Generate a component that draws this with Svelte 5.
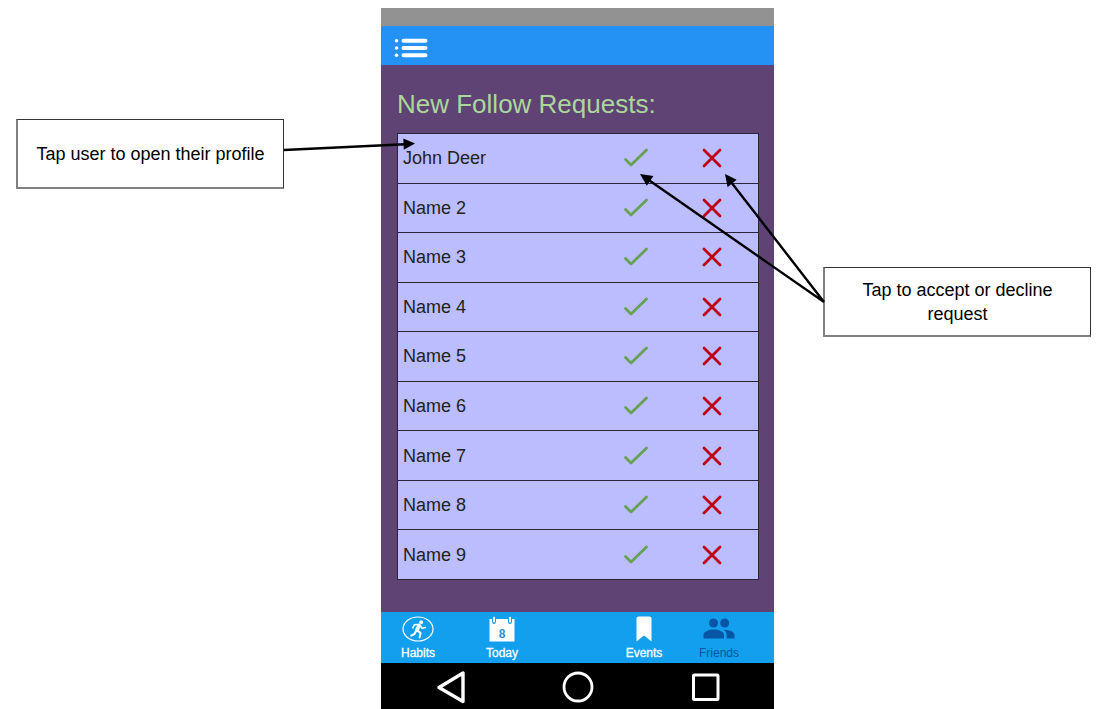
<script>
  let requests = $state([
    'John Deer', 'Name 2', 'Name 3', 'Name 4', 'Name 5', 'Name 6', 'Name 7', 'Name 8', 'Name 9'
  ]);
</script>

<main class="board">
  <p class="note note-left">Tap user to open their profile</p>

  <section class="phone">
    <div class="status"></div>
    <header class="appbar">
      <button class="icon-button" aria-label="Menu">
        <svg width="34" height="20" viewBox="0 0 34 20" fill="#fff">
          <circle cx="2.5" cy="2.8" r="1.8" /><circle cx="2.5" cy="10" r="1.8" /><circle cx="2.5" cy="17.2" r="1.8" />
          <path d="M9.5 2.8H31.5M9.5 10H31.5M9.5 17.2H31.5" stroke="#fff" stroke-width="4" stroke-linecap="round" />
        </svg>
      </button>
    </header>

    <div class="content">
      <h1>New Follow Requests:</h1>
      <table>
        <tbody>
          {#each requests as name}
            <tr>
              <td><button class="user">{name}</button></td>
              <td class="accept">
                <button class="icon-button" aria-label="Accept {name}">
                  <svg width="26" height="20" viewBox="0 0 26 20" fill="none" stroke="#66a154" stroke-width="2.8" stroke-linecap="round" stroke-linejoin="round">
                    <path d="M2.5 11.5L8 17L23.5 2" />
                  </svg>
                </button>
              </td>
              <td class="decline">
                <button class="icon-button" aria-label="Decline {name}">
                  <svg width="20" height="20" viewBox="0 0 20 20" fill="none" stroke="#bd0016" stroke-width="2.8" stroke-linecap="round">
                    <path d="M2 2L18 18M18 2L2 18" />
                  </svg>
                </button>
              </td>
            </tr>
          {/each}
        </tbody>
      </table>
    </div>

    <nav class="tabs">
      <div class="group group-start">
        <a href="#habits">
          <svg width="32" height="26" viewBox="0 0 32 26" fill="none" stroke="#fff" stroke-linecap="round" stroke-linejoin="round">
            <ellipse cx="16" cy="13" rx="15" ry="12" stroke-width="1.2" />
            <circle cx="19.2" cy="6.2" r="1.9" fill="#fff" stroke="none" />
            <path d="M17.2 9.6L14.8 14.2" stroke-width="3.8" />
            <path d="M16.5 8.5L12.3 8.8L10.8 11.8M18.3 9.5L20 12.3L23.3 11.6" stroke-width="1.5" />
            <path d="M15.4 14.6L18.6 17L17.6 21.4M14 14.8L12.5 18L9.2 19.6" stroke-width="2" />
          </svg>
          <span>Habits</span>
        </a>
        <a href="#today">
          <svg width="26" height="26" viewBox="0 0 26 26">
            <path fill="#fff" d="M0.5 3H3V5.5Q3 8 5 8Q7 8 7 5.5V3H19V5.5Q19 8 21 8Q23 8 23 5.5V3H25.5V25.5H0.5Z" />
            <path d="M5 1.8V5.5M21 1.8V5.5" stroke="#fff" stroke-width="2" stroke-linecap="round" />
            <text x="13" y="21.5" text-anchor="middle" font-size="12" font-weight="700" fill="#2c91cc">8</text>
          </svg>
          <span>Today</span>
        </a>
      </div>
      <div class="group group-end">
        <a href="#events">
          <svg width="16" height="26" viewBox="0 0 16 26">
            <path fill="#fff" d="M2.5 0.5H13.5Q15.5 0.5 15.5 2.5V25.5L8 19.5L0.5 25.5V2.5Q0.5 0.5 2.5 0.5Z" />
          </svg>
          <span>Events</span>
        </a>
        <a href="#friends" class="current" aria-current="page">
          <svg width="32" height="26" viewBox="0 0 32 26" fill="#0756a5">
            <circle cx="10.5" cy="7" r="4.5" />
            <circle cx="21.7" cy="7" r="4.5" />
            <path d="M0.5 22.5V19C0.5 15.5 6 13.6 10.7 13.6S21 15.5 21 19V22.5Z" />
            <path d="M20.3 13.6C25.5 13.8 31.5 15.7 31.5 19V22.5H23.6V19C23.6 16.7 22.4 15 20.3 13.6Z" />
          </svg>
          <span>Friends</span>
        </a>
      </div>
    </nav>

    <footer class="system">
      <button class="icon-button" aria-label="Back">
        <svg width="30" height="34" viewBox="0 0 30 34" fill="none" stroke="#fff" stroke-width="3.4" stroke-linejoin="round">
          <path d="M27 3V31.5L3 17.5Z" />
        </svg>
      </button>
      <button class="icon-button" aria-label="Home">
        <svg width="32" height="32" viewBox="0 0 32 32" fill="none" stroke="#fff" stroke-width="2.8">
          <circle cx="16" cy="16" r="14" />
        </svg>
      </button>
      <button class="icon-button" aria-label="Recent apps">
        <svg width="30" height="30" viewBox="0 0 30 30" fill="none" stroke="#fff" stroke-width="3" stroke-linejoin="round">
          <rect x="3.5" y="3" width="24.5" height="24.5" rx="1" />
        </svg>
      </button>
    </footer>

    <svg class="arrows" width="393" height="701" viewBox="0 0 393 701" stroke="#000" stroke-width="2.4" aria-hidden="true">
      <path d="M-97 142L24 136.2M443 294L267 171.5M443 294L350 174" />
      <g stroke="none">
        <path d="M34 135.5L22.3 130.4L22.8 141.8Z" />
        <path d="M259 166L272.4 167.9L265.8 177.7Z" />
        <path d="M344 166L355.6 171.8L346.6 179.2Z" />
      </g>
    </svg>
  </section>

  <p class="note note-right">Tap to accept or decline request</p>
</main>

<style>
  :global(body) {
    margin: 0;
    background: #fff;
  }

  .board {
    display: flex;
    justify-content: center;
    align-items: flex-start;
    padding: 8px 0 0 9px;
    font-family: "Liberation Sans", Arial, sans-serif;
    color: #000;
  }

  .note {
    box-sizing: border-box;
    display: flex;
    align-items: center;
    justify-content: center;
    width: 268px;
    min-height: 70px;
    margin: 0;
    padding: 8px 12px;
    border: 1px solid #333;
    border-left: 2px solid #808080;
    border-bottom: 2px solid #808080;
    background: #fff;
    font-size: 18px;
    line-height: 24px;
    text-align: center;
  }

  .note-left {
    margin: 111px 97px 0 0;
  }

  .note-right {
    margin: 259px 0 0 49px;
    padding: 8px 32px;
  }

  .phone {
    position: relative;
    flex: 0 0 393px;
    background: #5e4374;
  }

  .status {
    height: 18px;
    background: #929292;
  }

  .appbar {
    display: flex;
    align-items: center;
    height: 39px;
    padding: 5px 13px 0;
    box-sizing: border-box;
    background: #2491f5;
  }

  .icon-button {
    display: inline-flex;
    padding: 0;
    border: 0;
    background: none;
    cursor: pointer;
  }

  .content {
    padding: 23px 15px 32px 16px;
  }

  h1 {
    margin: 0 0 13px;
    font-size: 26px;
    font-weight: 400;
    line-height: 32px;
    color: #acd79b;
  }

  table {
    width: 100%;
    height: 447px;
    border-collapse: collapse;
    background: #bbbdff;
    border: 1px solid #29263a;
  }

  tr + tr {
    border-top: 1px solid #29263a;
  }

  td {
    padding: 0;
    vertical-align: middle;
  }

  .accept {
    width: 76px;
  }

  .decline {
    width: 76px;
    padding-right: 8px;
  }

  .accept,
  .decline {
    text-align: center;
  }

  td .icon-button {
    vertical-align: middle;
  }

  .user {
    display: block;
    width: 100%;
    padding: 0 5px;
    border: 0;
    background: none;
    font: inherit;
    font-size: 18px;
    line-height: 24px;
    text-align: left;
    color: #222;
    cursor: pointer;
  }

  .tabs {
    display: flex;
    justify-content: space-between;
    padding: 4px 34px 2px 16px;
    background: #129fee;
  }

  .group {
    display: flex;
  }

  .group-start {
    gap: 42px;
  }

  .group-end {
    gap: 33px;
  }

  .tabs a {
    display: flex;
    flex-direction: column;
    align-items: center;
    gap: 3px;
    width: 42px;
    font-size: 12px;
    line-height: 16px;
    color: #fff;
    text-decoration: none;
    -webkit-text-stroke: 0.3px;
  }

  .tabs text {
    -webkit-text-stroke: 0;
  }

  .tabs .current {
    color: #0756a5;
    -webkit-text-stroke: 0;
  }

  .system {
    display: flex;
    align-items: center;
    gap: 96px;
    height: 46px;
    padding: 2px 50px 0 55px;
    box-sizing: border-box;
    background: #000;
  }

  .arrows {
    position: absolute;
    top: 0;
    left: 0;
    overflow: visible;
    pointer-events: none;
  }
</style>
